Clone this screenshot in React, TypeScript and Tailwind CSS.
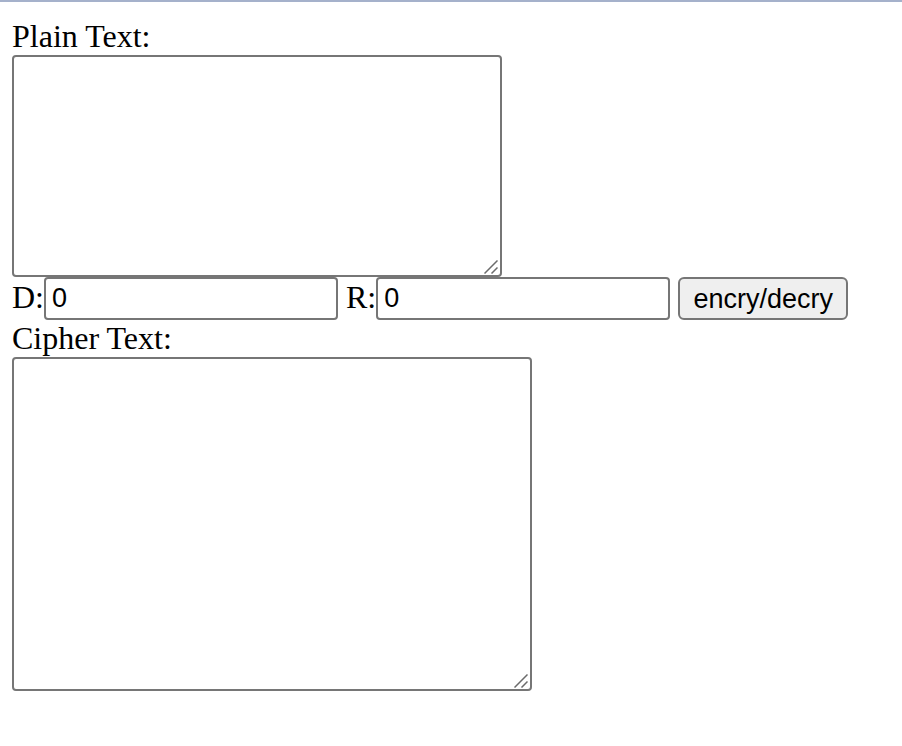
import { useState } from "react";

type AreaProps = {
  id: string;
  label: string;
  size: string;
};

function ResizeGrip() {
  return (
    <svg
      aria-hidden="true"
      viewBox="0 0 14 14"
      className="pointer-events-none absolute right-1 bottom-[3px] size-3.5"
      fill="none"
      stroke="#6b6b6b"
      strokeWidth="1.5"
    >
      <path d="M0.5 13.5 L13.5 0.5 M7.5 13.5 L13.5 7.5" />
    </svg>
  );
}

function TextArea({ id, label, size }: AreaProps) {
  return (
    <div className="flex flex-col items-start">
      <label htmlFor={id} className="h-[37px] leading-9">
        {label}
      </label>
      <div className={`relative max-w-full ${size}`}>
        <textarea
          id={id}
          className="block size-full resize-none rounded-[4px] border-2 border-[#767676] bg-white p-1 font-['Liberation_Mono',monospace] text-[27px] leading-8 outline-none"
        />
        <ResizeGrip />
      </div>
    </div>
  );
}

function NumberField({ id, label }: { id: string; label: string }) {
  const [value, setValue] = useState("0");
  return (
    <div className="flex">
      <label htmlFor={id} className="leading-10">
        {label}
      </label>
      <input
        id={id}
        type="text"
        value={value}
        onChange={(event) => setValue(event.target.value)}
        className="h-[43px] w-[294px] rounded-[4px] border-2 border-[#767676] bg-white px-1.5 font-['Liberation_Sans',Arial,sans-serif] text-[27px] outline-none"
      />
    </div>
  );
}

export default function App() {
  return (
    <main className="border-t-2 border-[#a5b1cb] bg-white px-3 pt-4 pb-14 font-['Liberation_Serif','Times_New_Roman',serif] text-[32px] text-black">
      <form onSubmit={(event) => event.preventDefault()}>
        <TextArea id="plain" label="Plain Text:" size="h-[222px] w-[490px]" />
        <div className="flex flex-wrap gap-x-2">
          <NumberField id="d" label="D:" />
          <NumberField id="r" label="R:" />
          <button
            type="submit"
            className="h-[43px] w-[170px] rounded-[6px] border-2 border-[#767676] bg-[#efefef] font-['Liberation_Sans',Arial,sans-serif] text-[27px] leading-8"
          >
            encry/decry
          </button>
        </div>
        <TextArea id="cipher" label="Cipher Text:" size="h-[334px] w-[520px]" />
      </form>
    </main>
  );
}
